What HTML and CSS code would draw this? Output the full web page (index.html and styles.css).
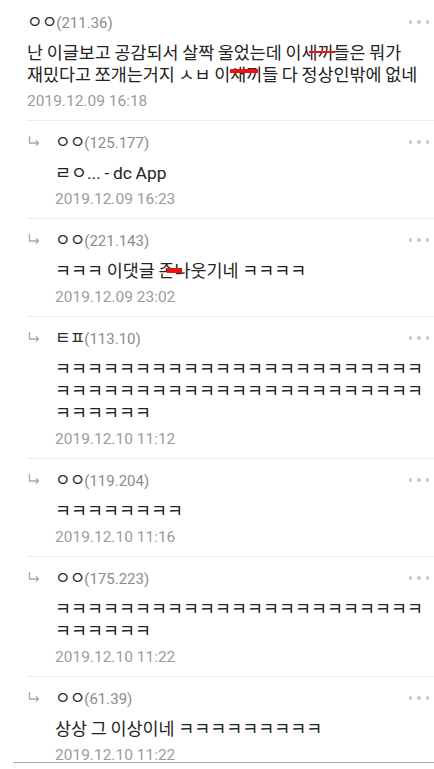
FILE: index.html
```html
<!DOCTYPE html>
<html lang="ko">
<head>
  <meta charset="UTF-8">
  <meta name="viewport" content="width=device-width, initial-scale=1.0">
  <title>댓글</title>
  <link rel="stylesheet" href="styles.css">
</head>
<body>
  <div class="thread">
    <ul class="comments">
      <li class="comment">
        <div class="comment-main">
          <div class="comment-head">
            <span class="writer"><span class="nick">ㅇㅇ</span><span class="ip">(211.36)</span></span>
            <span class="more"><i></i><i></i><i></i></span>
          </div>
          <p class="text">난 이글보고 공감되서 살짝 울었는데 이<span class="cut thin">새끼</span>들은 뭐가 재밌다고 쪼개는거지 ㅅㅂ 이<span class="cut bar">새끼</span>들 다 정상인밖에 없네</p>
          <div class="date">2019.12.09 16:18</div>
        </div>
      </li>

      <li class="comment reply">
        <svg class="reply-mark" width="12" height="10" viewBox="0 0 12 10"><path d="M1.5 0 V7 H10.5 M8 4.5 L10.5 7 L8 9.5"/></svg>
        <div class="comment-main">
          <div class="comment-head">
            <span class="writer"><span class="nick">ㅇㅇ</span><span class="ip">(125.177)</span></span>
            <span class="more"><i></i><i></i><i></i></span>
          </div>
          <p class="text">ㄹㅇ... - dc App</p>
          <div class="date">2019.12.09 16:23</div>
        </div>
      </li>

      <li class="comment reply">
        <svg class="reply-mark" width="12" height="10" viewBox="0 0 12 10"><path d="M1.5 0 V7 H10.5 M8 4.5 L10.5 7 L8 9.5"/></svg>
        <div class="comment-main">
          <div class="comment-head">
            <span class="writer"><span class="nick">ㅇㅇ</span><span class="ip">(221.143)</span></span>
            <span class="more"><i></i><i></i><i></i></span>
          </div>
          <p class="text">ㅋㅋㅋ 이댓글 <span class="cut block">존나</span>웃기네 ㅋㅋㅋㅋ</p>
          <div class="date">2019.12.09 23:02</div>
        </div>
      </li>

      <li class="comment reply">
        <svg class="reply-mark" width="12" height="10" viewBox="0 0 12 10"><path d="M1.5 0 V7 H10.5 M8 4.5 L10.5 7 L8 9.5"/></svg>
        <div class="comment-main">
          <div class="comment-head">
            <span class="writer"><span class="nick">ㅌㅍ</span><span class="ip">(113.10)</span></span>
            <span class="more"><i></i><i></i><i></i></span>
          </div>
          <p class="text break">ㅋㅋㅋㅋㅋㅋㅋㅋㅋㅋㅋㅋㅋㅋㅋㅋㅋㅋㅋㅋㅋㅋㅋㅋㅋㅋㅋㅋㅋㅋㅋㅋㅋㅋㅋㅋㅋㅋㅋㅋㅋㅋㅋㅋㅋㅋㅋㅋㅋㅋㅋㅋ</p>
          <div class="date">2019.12.10 11:12</div>
        </div>
      </li>

      <li class="comment reply">
        <svg class="reply-mark" width="12" height="10" viewBox="0 0 12 10"><path d="M1.5 0 V7 H10.5 M8 4.5 L10.5 7 L8 9.5"/></svg>
        <div class="comment-main">
          <div class="comment-head">
            <span class="writer"><span class="nick">ㅇㅇ</span><span class="ip">(119.204)</span></span>
            <span class="more"><i></i><i></i><i></i></span>
          </div>
          <p class="text">ㅋㅋㅋㅋㅋㅋㅋㅋ</p>
          <div class="date">2019.12.10 11:16</div>
        </div>
      </li>

      <li class="comment reply">
        <svg class="reply-mark" width="12" height="10" viewBox="0 0 12 10"><path d="M1.5 0 V7 H10.5 M8 4.5 L10.5 7 L8 9.5"/></svg>
        <div class="comment-main">
          <div class="comment-head">
            <span class="writer"><span class="nick">ㅇㅇ</span><span class="ip">(175.223)</span></span>
            <span class="more"><i></i><i></i><i></i></span>
          </div>
          <p class="text break">ㅋㅋㅋㅋㅋㅋㅋㅋㅋㅋㅋㅋㅋㅋㅋㅋㅋㅋㅋㅋㅋㅋㅋㅋㅋㅋㅋㅋㅋ</p>
          <div class="date">2019.12.10 11:22</div>
        </div>
      </li>

      <li class="comment reply">
        <svg class="reply-mark" width="12" height="10" viewBox="0 0 12 10"><path d="M1.5 0 V7 H10.5 M8 4.5 L10.5 7 L8 9.5"/></svg>
        <div class="comment-main">
          <div class="comment-head">
            <span class="writer"><span class="nick">ㅇㅇ</span><span class="ip">(61.39)</span></span>
            <span class="more"><i></i><i></i><i></i></span>
          </div>
          <p class="text">상상 그 이상이네 ㅋㅋㅋㅋㅋㅋㅋㅋㅋ</p>
          <div class="date">2019.12.10 11:22</div>
        </div>
      </li>
    </ul>
  </div>
</body>
</html>
```

FILE: styles.css
```css
body {
  margin: 0;
  background: #fff;
  font-family: Roboto, "Noto Sans CJK KR", sans-serif;
  color: #222;
}
.thread {
  height: 762px;
  overflow: hidden;
  margin-left: 13px;
  border-bottom: 1px solid #a9a9a9;
}
.comments {
  list-style: none;
  margin: 0;
  padding: 1px 0 0 14px;
}
.comment {
  display: flex;
  padding: 11px 5px 9px 0;
  border-bottom: 1px solid #ececec;
}
.comment-main {
  flex: 1;
  min-width: 0;
}
.reply-mark {
  flex: none;
  margin: 4px 15px 0 1px;
  fill: none;
  stroke: #a8a8a8;
  stroke-width: 1.3;
}
.comment-head {
  display: flex;
  align-items: center;
  justify-content: space-between;
  height: 20px;
  margin-bottom: 10px;
}
.writer {
  font-size: 15px;
  line-height: 20px;
}
.nick {
  font-size: 17px;
  letter-spacing: -1px;
  color: #2e2e2e;
}
.ip {
  color: #8c8c8c;
}
.more {
  display: flex;
  gap: 5px;
}
.more i {
  width: 3.5px;
  height: 3.5px;
  border-radius: 50%;
  background: #cbcbcb;
}
.text {
  margin: 0;
  font-size: 17.4px;
  line-height: 22px;
  word-spacing: -0.6px;
  word-break: keep-all;
  color: #222;
}
.text.break {
  word-break: break-all;
}
.date {
  margin-top: 5px;
  font-size: 15.5px;
  line-height: 20px;
  color: #9b9b9b;
}

/* red censor marks over words */
.cut {
  position: relative;
  display: inline-block;
}
.cut::after {
  content: "";
  position: absolute;
  background: #f01010;
}
.cut.thin::after {
  left: 7px;
  top: 9px;
  width: 26px;
  height: 1.6px;
}
.cut.bar::after {
  left: 0;
  top: 5px;
  width: 28px;
  height: 4px;
}
.cut.block::after {
  left: 9px;
  top: 8px;
  width: 15px;
  height: 5px;
}
```
